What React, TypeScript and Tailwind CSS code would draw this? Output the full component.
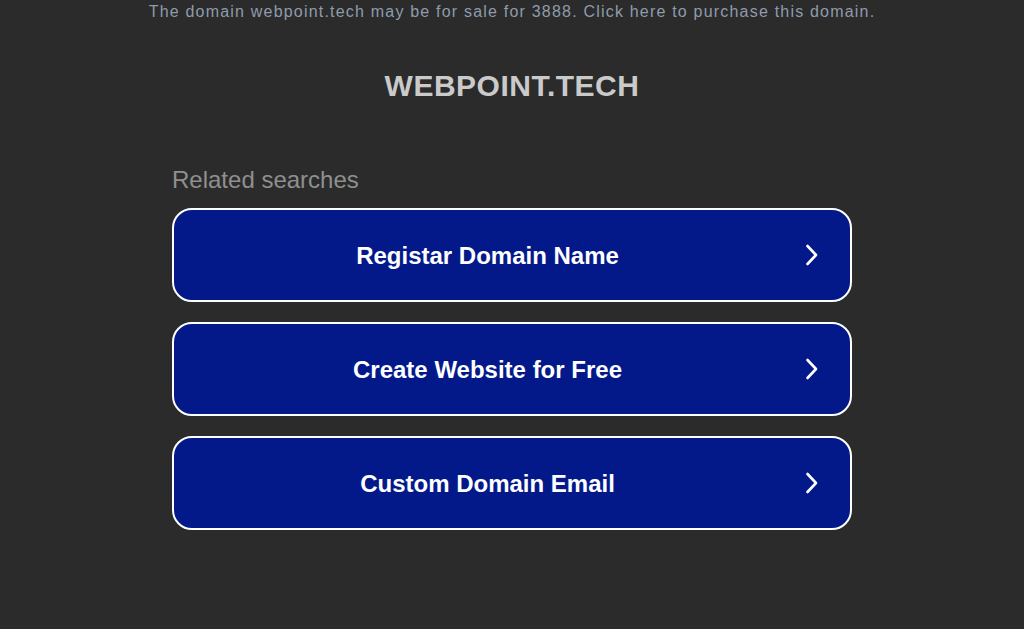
const searches = ["Registar Domain Name", "Create Website for Free", "Custom Domain Email"];

function Chevron() {
  return (
    <svg className="w-6 h-6" viewBox="0 0 24 24" fill="none" stroke="currentColor">
      <path strokeWidth={2.6} strokeLinecap="round" strokeLinejoin="round" d="M6.5 3l8.5 9-8.5 9" />
    </svg>
  );
}

export default function App() {
  return (
    <div className="min-h-[629px] w-full bg-[#2b2b2b] font-['Liberation_Sans',Arial,sans-serif]">
      <div className="text-center text-[16px] leading-6 tracking-[1.2px] text-[#8e9cac]">
        The domain webpoint.tech may be for sale for 3888. Click here to purchase this domain.
      </div>

      <h1 className="mt-[44px] text-center text-[30px] leading-9 font-bold tracking-[0.5px] text-[#cacaca]">
        WEBPOINT.TECH
      </h1>

      <div className="mx-auto mt-[62px] w-[680px]">
        <p className="text-[24px] leading-7 text-[#8f8f8f]">Related searches</p>
        <div className="mt-[14px] flex flex-col gap-5">
          {searches.map((s) => (
            <a
              key={s}
              href="#"
              className="flex h-[94px] items-center rounded-[20px] border-2 border-white bg-[#03198a] pr-[25px] text-white"
            >
              <span className="flex-1 pt-[2px] text-center text-[24px] font-bold">{s}</span>
              <Chevron />
            </a>
          ))}
        </div>
      </div>
    </div>
  );
}
